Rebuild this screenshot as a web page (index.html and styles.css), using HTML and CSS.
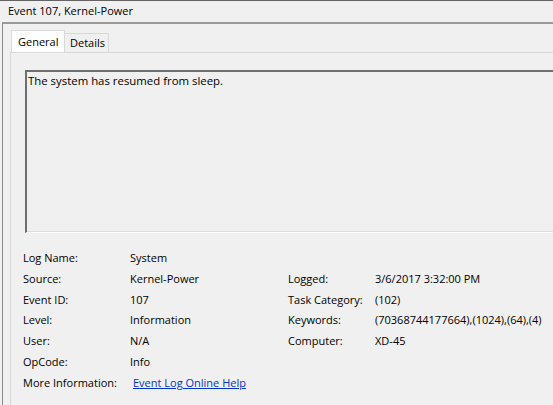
FILE: index.html
```html
<!DOCTYPE html>
<html lang="en">
<head>
    <meta charset="UTF-8">
    <title>Event 107, Kernel-Power</title>
    <link rel="stylesheet" href="styles.css">
</head>
<body>
    <div class="titlebar">Event 107, Kernel-Power</div>
    <div class="frame">
        <div class="tabs">
            <div class="tab active">General</div>
            <div class="tab">Details</div>
        </div>
        <div class="panel">
            <div class="message">The system has resumed from sleep.</div>
            <div class="fields">
                <span>Log Name:</span><span>System</span><span></span><span></span>
                <span>Source:</span><span>Kernel-Power</span><span>Logged:</span><span>3/6/2017 3:32:00 PM</span>
                <span>Event ID:</span><span>107</span><span>Task Category:</span><span>(102)</span>
                <span>Level:</span><span>Information</span><span>Keywords:</span><span>(70368744177664),(1024),(64),(4)</span>
                <span>User:</span><span>N/A</span><span>Computer:</span><span>XD-45</span>
                <span>OpCode:</span><span>Info</span><span></span><span></span>
                <span>More Information:</span><span class="link"><a href="#">Event Log Online Help</a></span><span></span><span></span>
            </div>
        </div>
    </div>
</body>
</html>
```

FILE: styles.css
```css
html, body {
    margin: 0;
    height: 100%;
    overflow: hidden;
}
body {
    background-color: #f0f0f0;
    font-family: "Open Sans", "Noto Sans", sans-serif;
    font-size: 11px;
    color: #000;
}
.titlebar {
    border-top: 1px solid #646464;
    height: 21px;
    line-height: 20px;
    padding-left: 8px;
    font-size: 11px;
}
.frame {
    margin-left: 2px;
    border-left: 1px solid #8c8c8c;
    border-top: 2px solid #999;
}
.tabs {
    display: flex;
    align-items: flex-end;
    padding-left: 8px;
    height: 28px;
}
.tab {
    box-sizing: border-box;
    height: 19px;
    width: 44px;
    border: 1px solid #d9d9d9;
    border-bottom: none;
    border-left: none;
    padding-left: 5px;
    line-height: 18px;
}
.tab.active {
    height: 22px;
    width: 54px;
    background-color: #fff;
    border-left: 1px solid #d9d9d9;
    padding-left: 6px;
    line-height: 21px;
}
.panel {
    margin-left: 7px;
    border-top: 1px solid #d9d9d9;
    border-left: 1px solid #d9d9d9;
    height: 335px;
    padding: 17px 0 0 14px;
}
.message {
    box-sizing: border-box;
    height: 163px;
    border-top: 2px solid #6e6e6e;
    border-left: 2px solid #6e6e6e;
    border-bottom: 1px solid #fff;
    box-shadow: inset 0 -1px 0 #dcdcdc;
    padding: 1px 0 0 1px;
    line-height: 16px;
    font-size: 11.4px;
}
.fields {
    display: grid;
    grid-template-columns: 107px 158px 87px auto;
    grid-auto-rows: 20.8px;
    padding: 15px 0 0 12px;
    margin-left: -14px;
    line-height: 20.8px;
}
.fields .link {
    padding-left: 3px;
}
.fields a {
    color: #0033cc;
}
```
